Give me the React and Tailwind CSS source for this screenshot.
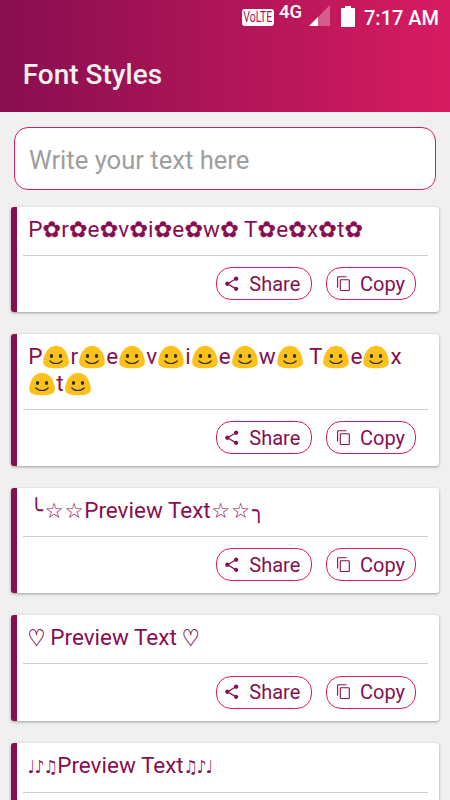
import React from "react";
import { MdShare } from "react-icons/md";

const FLOWER = "✿";
const BLOB = "blob";

const glyphStyles = {
  "✿": "w-[18.800px] text-[22px] [-webkit-text-stroke:0.4px_#880e4f]",
  "☆": "w-[20px] text-[21.500px]",
  "♡": "w-[16.500px] text-[20px] scale-y-[1.15] [-webkit-text-stroke:0.3px_#880e4f]",
  "♩": "w-[6.500px] text-[18px] scale-x-[0.85]",
  "♪": "w-[9.500px] text-[18px] scale-x-[0.85]",
  "♫": "w-[13px] text-[18px] scale-x-[0.9]",
  "╰": "w-[16px] text-[22px]",
  "╮": "w-[16px] text-[22px]",
};

function Blob() {
  return (
    <svg
      className="inline-block w-[28.100px] h-[24px] align-[-5px]"
      viewBox="0 0 28.1 24"
    >
      <path
        d="M14 .8C6.100 .8 1.200 9.500 1.200 17.500c0 4.400 5.500 5.800 12.800 5.800s12.800-1.400 12.800-5.800C26.800 9.500 21.900 .8 14 .8z"
        fill="#fcc21b"
      />
      <ellipse cx="9.500" cy="11" rx="1.700" ry="2.100" fill="#2f2f2f" />
      <ellipse cx="18.500" cy="11" rx="1.700" ry="2.100" fill="#2f2f2f" />
      <path
        d="M7.800 15.800c2.800 3.600 9.600 3.600 12.400 0"
        fill="none"
        stroke="#2f2f2f"
        strokeWidth="1.200"
        strokeLinecap="round"
      />
    </svg>
  );
}

function Glyph({ char }) {
  return (
    <span
      className={
        "inline-flex justify-center leading-none h-[22px] font-['DejaVu_Sans'] " +
        glyphStyles[char]
      }
    >
      {char}
    </span>
  );
}

function CopyIcon() {
  return (
    <svg
      className="w-[14px] h-[16px]"
      viewBox="0 0 14 16"
      fill="none"
      stroke="#880e4f"
      strokeWidth="1.100"
    >
      <path d="M.6 11.500V1.500Q.6 .7 1.400 .7H9.500" />
      <rect x="3.300" y="3.700" width="9" height="10.800" rx="0.800" />
    </svg>
  );
}

// puts a symbol after every letter, spaces are kept as they are
const decorate = (text, symbol) =>
  text.split("").flatMap((c) => (c === " " ? [c] : [c, symbol]));

const styles = [
  decorate("Preview Text", FLOWER),
  decorate("Preview Text", BLOB),
  ["╰", "☆", "☆", "Preview Text", "☆", "☆", "╮"],
  ["♡", " Preview Text ", "♡"],
  ["♩", "♪", "♫", "Preview Text", "♫", "♪", "♩"],
];

function StyledText({ parts }) {
  return parts.map((part, i) => {
    if (part === BLOB) return <Blob key={i} />;
    if (glyphStyles[part]) return <Glyph key={i} char={part} />;
    return <React.Fragment key={i}>{part}</React.Fragment>;
  });
}

function StyleCard({ parts }) {
  return (
    <div className="flex-none rounded-[3px] bg-white border-l-6 border-[#880e4f] shadow-[0_1px_3px_rgba(0,0,0,0.35)] pl-[6px] pr-[11px] pb-[12px]">
      <div className="pl-[5.200px] pr-[12px] pt-[9px] pb-[12.300px] text-[22.500px] leading-[26.500px] border-b border-[#cfcfcf] break-all">
        <StyledText parts={parts} />
      </div>
      <div className="flex justify-end gap-[14px] mt-[11.500px] pr-[12px]">
        <button className="flex items-center w-[96px] h-[33px] pl-[6px] rounded-[15px] border border-[#d81b60] text-[20px]">
          <MdShare className="w-[17.500px] h-[17.500px]" />
          <span className="ml-[8.800px]">Share</span>
        </button>
        <button className="flex items-center w-[90px] h-[33px] pl-[10px] rounded-[15px] border border-[#d81b60] text-[20px]">
          <CopyIcon />
          <span className="ml-[9px]">Copy</span>
        </button>
      </div>
    </div>
  );
}

function StatusBar() {
  return (
    <div className="flex h-[36px] pl-[242px] text-white">
      <span className="mt-[9px] w-[32px] h-[17px] rounded-[3px] bg-white flex items-center justify-center">
        <span className="text-[#ad1457] text-[15px] leading-none scale-x-[0.7]">
          VoLTE
        </span>
      </span>
      <span className="ml-[5px] mt-[2px] w-[24px] text-[18.500px] leading-[20px] font-medium">
        4G
      </span>
      <svg className="ml-[6px] mt-[5px] w-[21px] h-[21px]" viewBox="0 0 21 21">
        <path d="M21 0v21H0z" fill="#fff" opacity="0.300" />
        <path d="M9 12v9H0z" fill="#fff" />
      </svg>
      <svg className="ml-[11px] mt-[6px] w-[14px] h-[21px]" viewBox="0 0 14 21">
        <path d="M4 0h6v2h4v19H0V2h4z" fill="#fff" />
      </svg>
      <span className="ml-[9px] mt-[6px] text-[20px] leading-[24px] font-medium whitespace-nowrap">
        7:17 AM
      </span>
    </div>
  );
}

export default function App() {
  return (
    <div className="flex flex-col w-[450px] h-[800px] overflow-hidden bg-[#f0f0f0] font-['Roboto',sans-serif] text-[#880e4f]">
      <header className="flex-none h-[112px] bg-linear-to-r from-[#880e4f] to-[#d81b60]">
        <StatusBar />
        <h1 className="pl-[22.700px] pt-[22px] text-[28px] leading-[34px] font-medium text-[#f0f0f0]">
          Font Styles
        </h1>
      </header>
      <div className="flex-none pt-[15px] px-[14px]">
        <input
          className="block w-full h-[63px] rounded-[14px] border border-[#d81b60] bg-white px-[14px] pt-[3px] text-[25.600px] placeholder:text-[#9e9e9e]"
          placeholder="Write your text here"
        />
      </div>
      <div className="flex flex-col gap-[22px] pt-[17px] px-[11px]">
        {styles.map((parts, i) => (
          <StyleCard key={i} parts={parts} />
        ))}
      </div>
    </div>
  );
}
